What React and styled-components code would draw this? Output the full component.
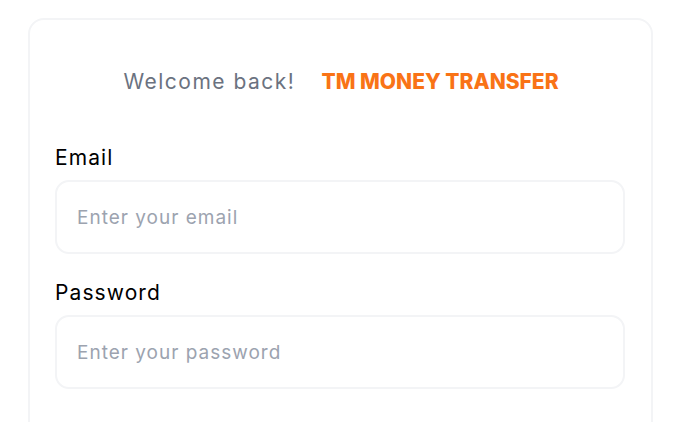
import React from "react";
import styled, { createGlobalStyle } from "styled-components";

const Global = createGlobalStyle`
  html, body { margin: 0; padding: 0; background: #ffffff; }
  body { font-family: "Inter", "Noto Sans", sans-serif; }
  * { box-sizing: border-box; }
`;

const Page = styled.div`
  padding: 18px 27px 0 28px;
  height: 422px;
  overflow: hidden;
`;

const Card = styled.div`
  border: 2px solid #f3f4f6;
  border-radius: 16px;
  padding: 47px 26px 60px 25px;
  min-height: 500px;
`;

const Header = styled.div`
  display: flex;
  justify-content: center;
  align-items: center;
  gap: 26px;
  line-height: 30px;
  margin-bottom: 46px;
  padding-left: 2px;
`;

const Welcome = styled.span`
  color: #6b7280;
  font-size: 21px;
  font-weight: 400;
  letter-spacing: 1.5px;
`;

const Brand = styled.span`
  color: #f97316;
  font-size: 21px;
  font-weight: 800;
  letter-spacing: 0;
`;

const Field = styled.div`
  display: flex;
  flex-direction: column;
  gap: 7px;
  margin-bottom: 24px;
`;

const Label = styled.label`
  font-size: 21px;
  line-height: 30px;
  letter-spacing: 1.1px;
  color: #000000;
`;

const Input = styled.input`
  height: 74px;
  width: 100%;
  border: 2px solid #f3f4f6;
  border-radius: 14px;
  padding: 0 20px;
  font-family: inherit;
  font-size: 19px;
  letter-spacing: 1px;
  color: #111827;
  outline: none;
  background: #fff;
  &::placeholder { color: #9ca3af; }
`;

export default function App() {
  return (
    <Page>
      <Global />
      <Card>
        <Header>
          <Welcome>Welcome back!</Welcome>
          <Brand>TM MONEY TRANSFER</Brand>
        </Header>
        <Field>
          <Label htmlFor="email">Email</Label>
          <Input id="email" type="email" placeholder="Enter your email" />
        </Field>
        <Field>
          <Label htmlFor="password">Password</Label>
          <Input id="password" type="password" placeholder="Enter your password" />
        </Field>
      </Card>
    </Page>
  );
}
